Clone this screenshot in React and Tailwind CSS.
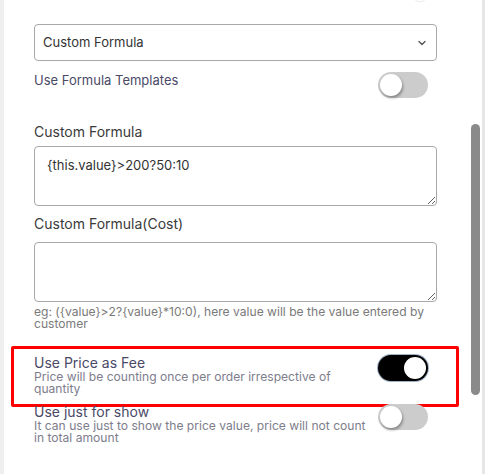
import React from "react";

const Toggle = ({ on }) => (
  <div
    className={`mr-[9px] flex h-[26px] w-[50px] shrink-0 items-center rounded-full px-[2px] ${
      on ? "justify-end bg-black ring-1 ring-[#9fb0c4]" : "justify-start bg-[#cccccc]"
    }`}
  >
    <div
      className={`h-[22px] w-[22px] rounded-full bg-white ${
        on ? "" : "shadow-[1px_2px_3px_rgba(0,0,0,0.35)]"
      }`}
    />
  </div>
);

const SwitchRow = ({ title, desc, on, small, className = "" }) => (
  <div className={`flex items-start justify-between ${className}`}>
    <div className="flex flex-col">
      <span className={`${small ? "text-[13px]" : "text-[14px]"} leading-[16px] text-[#4a4a68]`}>{title}</span>
      {desc && (
        <span className="max-w-[340px] text-[12.1px] leading-[12px] text-[#7d7d8c]">{desc}</span>
      )}
    </div>
    <Toggle on={on} />
  </div>
);

export default function App() {
  return (
    <div className="flex h-[474px] w-[485px] overflow-hidden bg-white font-['Inter',sans-serif]">
      <div className="w-[4px] shrink-0 bg-[#efefef]" />

      {/* settings form */}
      <div className="relative w-[458px] shrink-0 pl-[30px]">
        <div className="absolute left-[409px] top-[-10px] h-[12px] w-[14px] rounded-full border border-[#ececec]" />
        <div className="flex w-[403px] flex-col pt-[24px]">
          <div className="flex h-[37px] items-center justify-between rounded-[4px] border border-[#a8a8a8] pl-[8px] pr-[9px]">
            <span className="text-[13px] text-[#333]">Custom Formula</span>
            <svg width="10" height="10" viewBox="0 0 10 10" fill="none">
              <path d="M2 3.5 5 6.5 8 3.5" stroke="#555" strokeWidth="1.4" strokeLinecap="round" strokeLinejoin="round" />
            </svg>
          </div>

          <SwitchRow title="Use Formula Templates" small className="mt-[11px]" />

          <label className="mt-[26px] text-[14px] leading-[16px] text-[#3a3a3a]">Custom Formula</label>
          <textarea
            readOnly
            defaultValue="{this.value}>200?50:10"
            className="mt-[6px] h-[60px] w-full rounded-[4px] border border-[#a8a8a8] px-[12px] pt-[10px] text-[13px] leading-[16px] text-[#333] outline-none"
          />

          <label className="mt-[10px] text-[14px] leading-[16px] text-[#3a3a3a]">Custom Formula(Cost)</label>
          <textarea
            readOnly
            className="mt-[10px] h-[60px] w-full rounded-[4px] border border-[#a8a8a8] px-[12px] pt-[10px] text-[13px] leading-[16px] text-[#333] outline-none"
          />
          <p className="mt-[4px] text-[12.1px] leading-[12px] text-[#7a7a7a]">
            eg: ({"{value}"}&gt;2?{"{value}"}*10:0), here value will be the value entered by customer
          </p>

          <div className="-ml-[23px] -mr-[22px] mt-[16px] rounded-[2px] border-[3px] border-[#ff0000] pb-[9px] pl-[20px] pr-[19px] pt-[6px]">
            <SwitchRow
              title="Use Price as Fee"
              desc="Price will be counting once per order irrespective of quantity"
              on
            />
          </div>

          <SwitchRow
            title="Use just for show"
            desc="It can use just to show the price value, price will not count in total amount"
            className="-mt-[3px]"
          />
        </div>
      </div>

      {/* scrollbar */}
      <div className="w-[20px] shrink-0 pl-[9px] pt-[124px]">
        <div className="h-[271px] w-[9px] rounded-full bg-[#8a8a8a]" />
      </div>
      <div className="w-[3px] shrink-0 bg-[#e6e6e6]" />
    </div>
  );
}
